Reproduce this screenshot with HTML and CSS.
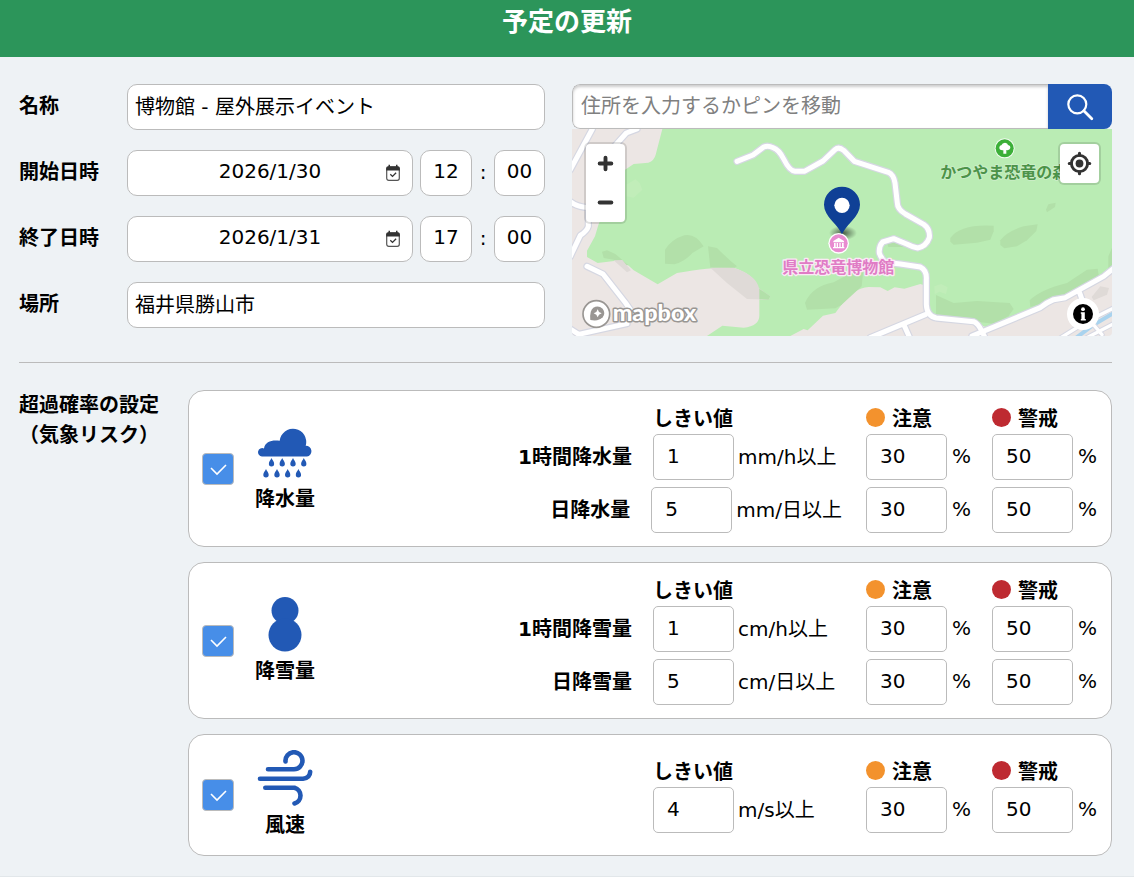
FILE: index.html
```html
<!DOCTYPE html>
<html lang="ja">
<head>
<meta charset="utf-8">
<meta name="viewport" content="width=device-width, initial-scale=1">
<title>予定の更新</title>
<link rel="stylesheet" href="styles.css">
</head>
<body>
<svg class="defs" aria-hidden="true">
  <symbol id="calendar" viewBox="0 0 16 18">
    <rect x="1.700" y="3" width="12.600" height="13.300" rx="2" fill="none" stroke="#555" stroke-width="1.200"/>
    <path d="M1.200 6.500V4.200a2 2 0 0 1 2-2h9.600a2 2 0 0 1 2 2v2.300zM3.500.8h1.500v2H3.500zM11 .8h1.500v2H11z" fill="#333"/>
    <path d="M5.300 10.200l2.200 2.200 3.600-3.600" fill="none" stroke="#333" stroke-width="1.300"/>
  </symbol>
  <symbol id="tick" viewBox="0 0 32 32">
    <path d="M9 15l6 6 9-9" fill="none" stroke="#fff" stroke-width="1.600"/>
  </symbol>
  <symbol id="drop" viewBox="0 0 6 9">
    <path d="M3 0C3.800 1.900 5.700 3.800 5.700 5.800a2.700 2.700 0 0 1-5.400 0C.3 3.800 2.200 1.900 3 0z" fill="#2259b5"/>
  </symbol>
</svg>

<header class="topbar"><h1>予定の更新</h1></header>

<main class="page">
  <section class="basics">
    <div class="fields">
      <div class="field">
        <label for="name">名称</label>
        <input class="box" id="name" type="text" value="博物館 - 屋外展示イベント">
      </div>
      <div class="field">
        <label for="start">開始日時</label>
        <div class="datetime">
          <div class="date">
            <input class="box center" id="start" type="text" value="2026/1/30">
            <button class="pick" type="button" aria-label="開始日を選択"><svg><use href="#calendar"/></svg></button>
          </div>
          <input class="box center time" type="text" value="12" aria-label="開始 時">
          <span class="colon">:</span>
          <input class="box center time" type="text" value="00" aria-label="開始 分">
        </div>
      </div>
      <div class="field">
        <label for="end">終了日時</label>
        <div class="datetime">
          <div class="date">
            <input class="box center" id="end" type="text" value="2026/1/31">
            <button class="pick" type="button" aria-label="終了日を選択"><svg><use href="#calendar"/></svg></button>
          </div>
          <input class="box center time" type="text" value="17" aria-label="終了 時">
          <span class="colon">:</span>
          <input class="box center time" type="text" value="00" aria-label="終了 分">
        </div>
      </div>
      <div class="field">
        <label for="place">場所</label>
        <input class="box" id="place" type="text" value="福井県勝山市">
      </div>
    </div>

    <div class="locator">
      <div class="search">
        <input type="text" placeholder="住所を入力するかピンを移動" aria-label="住所">
        <button type="button" aria-label="検索">
          <svg viewBox="0 0 28 28"><circle cx="11.300" cy="11.300" r="9" fill="none" stroke="#fff" stroke-width="2.200"/><path d="M17.800 17.800l8 8" stroke="#fff" stroke-width="2.800" stroke-linecap="round"/></svg>
        </button>
      </div>
      <div class="map">
        <svg class="terrain" viewBox="15 178 1620 621" preserveAspectRatio="xMidYMid slice" role="img" aria-label="地図">
          <defs>
            <radialGradient id="shade"><stop offset="0" stop-opacity=".6"/><stop offset="1" stop-opacity="0"/></radialGradient>
          </defs>
          <rect x="15" y="178" width="1620" height="621" fill="#ece6e4"/>
          <path d="M286 178L266 255Q262 272 244 279L200 283L172 302L120 400L94 466L84 500L60 543V562L92 580L166 571L200 602L272 644L330 610Q440 592 500 594Q578 620 577 676V738Q577 768 530 774L466 768L420 799H670L710 778L722 782L768 738L805 730L823 706Q860 655 905 652L940 653L962 664L983 653L1012 657L1060 643L1082 650L1090 745L1220 756L1262 775L1435 706L1505 680L1635 598V178Z" fill="#baecb4"/>
          <g fill="#b2e0a9">
            <path d="M294 540Q315 508 352 497Q385 490 410 530L376 550Q355 575 322 584L294 582Z"/>
            <path d="M423 530L450 535Q485 570 510 590L500 595L430 594Z"/>
            <path d="M714 700Q735 650 800 638L890 590L884 650L823 706L805 716L720 720Z"/>
            <path d="M1150 505Q1180 462 1280 468V485L1270 510L1230 519L1160 525L1150 516Z"/>
            <path d="M1300 512Q1320 485 1370 470L1412 464L1408 484L1380 512L1350 530L1312 536L1300 526Z"/>
            <path d="M1437 420L1444 404L1466 399L1464 412L1440 428Z"/>
            <path d="M1107 676L1160 700L1230 694L1328 700L1340 718L1324 740L1280 762L1107 742Z"/>
            <path d="M1388 692Q1420 660 1500 640L1560 600L1592 597L1596 622L1460 690L1390 712Z"/>
            <path d="M1635 534L1624 560V598L1635 604ZM960 520h60l-10 12h-46z"/>
            <path d="M105 546L120 542L145 553L185 587L170 586L140 570L110 565Z"/>
          </g>
          <g fill="#dfdad7">
            <path d="M430 594L500 594Q560 614 573 646L576 656L610 680L605 690L540 688L480 640Z"/>
            <path d="M140 572L166 571L192 602L180 608Z"/>
            <path d="M1574 682L1600 650L1626 655L1620 675L1580 692Z"/>
          </g>
          <path d="M577 657L610 680L605 690L577 688Z" fill="#b2e0a9"/>
          <g fill="#c1edb9"><path d="M178 345L205 329L218 340L226 360L200 384L178 380Z"/><path d="M1102 650l20-7 20 10-5 20-20-7-14 8z"/></g>
          <g fill="none" stroke-linecap="round" stroke-linejoin="round">
            <g stroke="#d5d7e2" stroke-width="22">
              <path d="M10 300L76 178M80 300L178 190L210 178"/>
              <path d="M10 396Q30 412 64 414V470Q60 484 40 497L10 560"/>
              <path d="M60 590L108 613L176 700L200 735M5 775L35 794L180 762"/>
              <path d="M510 275L558 256L590 232Q603 226 618 234Q636 240 650 268Q668 304 684 305H712L768 274L804 240Q815 230 830 242L862 275L964 308Q980 315 984 340L991 400Q991 418 1015 433L1070 464Q1090 478 1087 504Q1078 530 1052 535Q1036 532 1019 523L980 507L947 517Q935 530 937 550Q943 568 956 578L1000 583L1060 592Q1080 602 1078 630V705Q1080 740 1108 745L1220 756Q1232 760 1245 785L1255 806"/>
              <path d="M1215 799L1420 714Q1440 698 1460 690L1495 684L1610 620L1640 596M1536 664L1548 698M910 804L1075 735M1012 768L1028 804"/>
            </g>
            <g stroke="#fff" stroke-width="15">
              <path d="M10 300L76 178M80 300L178 190L210 178M10 396Q30 412 64 414V470Q60 484 40 497L10 560M60 590L108 613L176 700L200 735M5 775L35 794L180 762"/>
              <path d="M510 275L558 256L590 232Q603 226 618 234Q636 240 650 268Q668 304 684 305H712L768 274L804 240Q815 230 830 242L862 275L964 308Q980 315 984 340L991 400Q991 418 1015 433L1070 464Q1090 478 1087 504Q1078 530 1052 535Q1036 532 1019 523L980 507L947 517Q935 530 937 550Q943 568 956 578L1000 583L1060 592Q1080 602 1078 630V705Q1080 740 1108 745L1220 756Q1232 760 1245 785L1255 806"/>
              <path d="M1215 799L1420 714Q1440 698 1460 690L1495 684L1610 620L1640 596M1536 664L1548 698M910 804L1075 735M1012 768L1028 804"/>
            </g>
            <path d="M1520 810L1580 765L1640 730" stroke="#a9d3ee" stroke-width="12"/>
            <path d="M1480 805L1560 755L1640 715M1560 804L1640 762M1575 760L1605 795" stroke="#d5d7e2" stroke-width="16"/>
            <path d="M1480 805L1560 755L1640 715M1560 804L1640 762M1575 760L1605 795" stroke="#fff" stroke-width="10"/>
          </g>

          <circle cx="1313" cy="236" r="30" fill="#fff" opacity=".8"/><circle cx="1313" cy="236" r="27" fill="#3caf38"/>
          <path d="M1309 252V242Q1296 243 1297 233Q1298 227 1303 227Q1306 219 1314 219Q1322 220 1323 226Q1331 228 1330 235Q1328 243 1318 241V252Z" fill="#fff"/>
          <text class="place-park" x="1120" y="324">かつやま恐竜の森</text>

          <ellipse cx="828" cy="490" rx="42" ry="22" fill="url(#shade)"/>
          <circle cx="815" cy="521" r="31" fill="#fff"/><circle cx="815" cy="521" r="27" fill="#e88bd0"/>
          <path d="M799 514L815 504L831 514V518H799ZM801 520h5v12h-5zM809 520h4v12h-4zM817 520h4v12h-4zM825 520h5v12h-5zM798 532h34v4h-34z" fill="#fff"/>
          <path d="M825 494Q817 477 796 455Q771 427 771 405A54 54 0 0 1 879 405Q879 427 854 455Q833 477 825 494Z" fill="#0f4096"/>
          <circle cx="825" cy="407" r="23" fill="#fff"/>
          <text class="place-museum" x="646" y="609">県立恐竜博物館</text>

          <circle cx="88" cy="733" r="40" fill="#fff" stroke="#999693" stroke-width="5"/>
          <path d="M70 751Q67 723 79 714Q94 705 107 717Q117 731 107 743Q95 756 70 751Z" fill="#999693"/>
          <path d="M92 719l4 8 8 4-8 4-4 8-4-8-8-4 8-4z" fill="#fff"/>
          <text class="brand" x="137" y="754">mapbox</text>
        </svg>
        <div class="zoom">
          <button type="button" aria-label="拡大"><svg viewBox="0 0 40 39"><path d="M14 19.500h12M20 13.500v12" stroke="#333" stroke-width="4" stroke-linecap="round"/></svg></button>
          <button type="button" aria-label="縮小"><svg viewBox="0 0 40 39"><path d="M14 19.500h12" stroke="#333" stroke-width="4" stroke-linecap="round"/></svg></button>
        </div>
        <button class="locate" type="button" aria-label="現在地">
          <svg viewBox="0 0 40 40"><circle cx="20" cy="20" r="8.300" fill="none" stroke="#333" stroke-width="3"/><circle cx="20" cy="20" r="4" fill="#333"/><path d="M20 9.500v2M20 28.500v2M9.500 20h2M28.500 20h2" stroke="#333" stroke-width="3.200" stroke-linecap="round"/></svg>
        </button>
        <button class="info" type="button" aria-label="地図の情報">
          <svg viewBox="0 0 32 32"><circle cx="16" cy="16" r="10" fill="#000"/><circle cx="16" cy="11.200" r="1.900" fill="#fff"/><path d="M13.800 14.200h4v6.800h1v1.600h-5v-1.600h.6v-5.200h-.6z" fill="#fff"/></svg>
        </button>
      </div>
    </div>
  </section>

  <section class="risk">
    <h2>超過確率の設定<br>（気象リスク）</h2>
    <div class="cards">
      <article class="card">
        <span class="check"><input type="checkbox" id="rain" checked><svg><use href="#tick"/></svg></span>
        <label class="kind" for="rain">
          <svg viewBox="0 -3 56 56"><path d="M5 29.500a4.200 4.200 0 1 1 2-8C8 14 16 12.600 22.700 13.800a13.300 13.300 0 1 1 26 5A5.400 5.400 0 0 1 50 29.500Z" fill="#2259b5"/>
            <g><use href="#drop" x="11.500" y="31" width="6" height="9"/><use href="#drop" x="22.200" y="31" width="6" height="9"/><use href="#drop" x="33" y="31" width="6" height="9"/><use href="#drop" x="43.800" y="31" width="6" height="9"/><use href="#drop" x="6" y="42" width="6" height="9"/><use href="#drop" x="17" y="42" width="6" height="9"/><use href="#drop" x="27.700" y="42" width="6" height="9"/><use href="#drop" x="38.400" y="42" width="6" height="9"/></g></svg>
          降水量
        </label>
        <div class="levels">
          <div class="line head"><span class="limit">しきい値</span><span class="pct"><i class="dot caution"></i>注意</span><span class="pct"><i class="dot warning"></i>警戒</span></div>
          <div class="line">
            <label for="rain-h">1時間降水量</label>
            <span class="limit"><input class="num" id="rain-h" type="text" value="1"><span class="unit">mm/h以上</span></span>
            <span class="pct"><input class="num" type="text" value="30" aria-label="1時間降水量 注意"><span class="sign">%</span></span>
            <span class="pct"><input class="num" type="text" value="50" aria-label="1時間降水量 警戒"><span class="sign">%</span></span>
          </div>
          <div class="line">
            <label for="rain-d">日降水量</label>
            <span class="limit"><input class="num" id="rain-d" type="text" value="5"><span class="unit">mm/日以上</span></span>
            <span class="pct"><input class="num" type="text" value="30" aria-label="日降水量 注意"><span class="sign">%</span></span>
            <span class="pct"><input class="num" type="text" value="50" aria-label="日降水量 警戒"><span class="sign">%</span></span>
          </div>
        </div>
      </article>

      <article class="card">
        <span class="check"><input type="checkbox" id="snow" checked><svg><use href="#tick"/></svg></span>
        <label class="kind" for="snow">
          <svg viewBox="0 0 56 56"><circle cx="28" cy="14.500" r="13.500" fill="#2259b5"/><circle cx="28" cy="39" r="16.500" fill="#2259b5"/></svg>
          降雪量
        </label>
        <div class="levels">
          <div class="line head"><span class="limit">しきい値</span><span class="pct"><i class="dot caution"></i>注意</span><span class="pct"><i class="dot warning"></i>警戒</span></div>
          <div class="line">
            <label for="snow-h">1時間降雪量</label>
            <span class="limit"><input class="num" id="snow-h" type="text" value="1"><span class="unit">cm/h以上</span></span>
            <span class="pct"><input class="num" type="text" value="30" aria-label="1時間降雪量 注意"><span class="sign">%</span></span>
            <span class="pct"><input class="num" type="text" value="50" aria-label="1時間降雪量 警戒"><span class="sign">%</span></span>
          </div>
          <div class="line">
            <label for="snow-d">日降雪量</label>
            <span class="limit"><input class="num" id="snow-d" type="text" value="5"><span class="unit">cm/日以上</span></span>
            <span class="pct"><input class="num" type="text" value="30" aria-label="日降雪量 注意"><span class="sign">%</span></span>
            <span class="pct"><input class="num" type="text" value="50" aria-label="日降雪量 警戒"><span class="sign">%</span></span>
          </div>
        </div>
      </article>

      <article class="card">
        <span class="check"><input type="checkbox" id="wind" checked><svg><use href="#tick"/></svg></span>
        <label class="kind" for="wind">
          <svg viewBox="0 0 56 56"><g fill="none" stroke="#2259b5" stroke-width="4.600" stroke-linecap="round"><path d="M11 19.200H37A8.500 8.500 0 1 0 28.500 11.500"/><path d="M3 28.700H46Q53 28 53.200 21.800"/><path d="M8.300 37.700H37.500A8.200 8.200 0 0 1 37.500 53.500"/></g></svg>
          風速
        </label>
        <div class="levels">
          <div class="line head"><span class="limit">しきい値</span><span class="pct"><i class="dot caution"></i>注意</span><span class="pct"><i class="dot warning"></i>警戒</span></div>
          <div class="line">
            <span class="limit"><input class="num" type="text" value="4" aria-label="風速 しきい値"><span class="unit">m/s以上</span></span>
            <span class="pct"><input class="num" type="text" value="30" aria-label="風速 注意"><span class="sign">%</span></span>
            <span class="pct"><input class="num" type="text" value="50" aria-label="風速 警戒"><span class="sign">%</span></span>
          </div>
        </div>
      </article>
    </div>
  </section>
</main>
</body>
</html>
```
FILE: styles.css
```css
* { box-sizing: border-box; }

body {
  margin: 0;
  background: #eef2f5;
  color: #000;
  font: 20px/30px "DejaVu Sans", "Noto Sans CJK JP", sans-serif;
}

input, button { font: inherit; color: inherit; margin: 0; }
button { padding: 0; border: 0; background: none; cursor: pointer; }
svg { display: block; }
h1, h2 { margin: 0; }
.defs { position: absolute; width: 0; height: 0; }

.topbar {
  height: 57px;
  padding-top: 7px;
  background: #2c955a;
  color: #fff;
  text-align: center;
}
.topbar h1 { font-size: 26px; line-height: 30px; }

.page { padding: 27px 22px 20px 19px; border-bottom: 2px solid #e2e7ea; }

.basics {
  display: grid;
  grid-template-columns: 526fr 540fr;
  gap: 27px;
  padding-bottom: 26px;
  border-bottom: 1px solid #bbb;
}

.fields { display: grid; gap: 20px; align-content: start; }
.field { display: flex; align-items: center; }
.field > label { flex: 0 0 108px; padding-bottom: 2px; font-weight: bold; }

.box {
  flex: 1;
  width: 100%;
  min-width: 0;
  height: 46px;
  padding: 0 7px 4px;
  border: 1px solid #bbb;
  border-radius: 10px;
  background: #fff;
}
.center { text-align: center; }
.datetime { flex: 1; display: flex; align-items: center; min-width: 0; }
.date { flex: 1; display: flex; position: relative; margin-right: 7px; }
.pick { position: absolute; right: 12px; top: 14px; }
.pick svg { width: 16px; height: 18px; }
.box.time { flex: 0 0 52px; }
.colon { width: 22px; padding-bottom: 2px; text-align: center; }
.colon + .box.time { flex-basis: 51px; }

.locator { display: flex; flex-direction: column; }
.search { display: flex; height: 45px; border-radius: 8px; overflow: hidden; }
.search input {
  flex: 1;
  min-width: 0;
  padding: 0 8px 2px;
  border: 1px solid #bbb;
  border-right: 0;
  border-radius: 8px 0 0 8px;
  background: #fff;
  box-shadow: inset 0 2px 3px #ccc;
}
.search input::placeholder { color: #808080; opacity: 1; }
.search button {
  flex: 0 0 64px;
  display: grid;
  place-items: center;
  background: #2259b5;
}
.search button svg { width: 28px; height: 28px; }

.map {
  flex: 1;
  position: relative;
  min-height: 207px;
  border-radius: 0 0 4px 4px;
  overflow: hidden;
}
.terrain { position: absolute; width: 100%; height: 100%; }
.terrain text { font-family: "Noto Sans CJK JP", sans-serif; font-size: 48px; font-weight: bold; paint-order: stroke; stroke-linejoin: round; }
.terrain .place-park { fill: #4c9349; stroke: #cdeeca; stroke-width: 5px; }
.terrain .place-museum { fill: #e07cc5; stroke: #fbe9f6; stroke-width: 8px; }
.terrain .brand { font-family: Lato, sans-serif; font-size: 70px; font-weight: 900; fill: #fff; stroke: #999693; stroke-width: 9px; }

.zoom, .locate, .info { position: absolute; background: #fff; }
.zoom, .locate { border-radius: 4px; box-shadow: 0 0 0 2px rgba(0, 0, 0, .12); }
.zoom { left: 14px; top: 15px; display: flex; flex-direction: column; }
.zoom svg, .locate svg { width: 39px; height: 39px; }
.locate { right: 13px; top: 15px; }
.info { right: 13px; bottom: 6px; border-radius: 16px; }
.info svg { width: 32px; height: 32px; }

.risk { display: flex; padding-top: 27px; }
.risk h2 { flex: 0 0 169px; font-size: 20px; line-height: 30px; }
.cards { flex: 1; display: grid; gap: 15px; }

.card {
  display: flex;
  align-items: center;
  padding: 13px 14px 13px 13px;
  border: 1px solid #bbb;
  border-radius: 16px;
  background: #fff;
}
.check { display: grid; }
.check > * { grid-area: 1 / 1; width: 32px; height: 32px; }
.check input { appearance: none; border: 1px solid #bbb; border-radius: 4px; background: #478ee8; }
.check svg { pointer-events: none; }
.check input:not(:checked) { background: #fff; }

.kind {
  flex: 0 0 102px;
  display: flex;
  flex-direction: column;
  align-items: center;
  gap: 4px;
  padding: 2px 0;
  font-weight: bold;
}
.kind svg { width: 56px; height: 56px; }

.levels { flex: 1; }
.line { display: flex; justify-content: flex-end; align-items: center; }
.line + .line + .line { margin-top: 7px; }
.line > label { margin-right: 21px; font-weight: bold; }
.head { height: 30px; font-weight: bold; }
.limit { display: flex; align-items: center; gap: 4px; min-width: 189px; margin-right: 3px; }
.unit { min-width: 104px; }
.pct { display: flex; align-items: center; gap: 5px; width: 105px; margin-left: 21px; }
.sign { padding-bottom: 2px; }
.num {
  width: 81px;
  height: 46px;
  padding: 0 13px 3px;
  border: 1px solid #bbb;
  border-radius: 5px;
  background: #fff;
}
.dot { width: 19px; height: 19px; margin: 0 2px 4px 0; border-radius: 50%; }
.caution { background: #f3922d; }
.warning { background: #be2a31; }
```
